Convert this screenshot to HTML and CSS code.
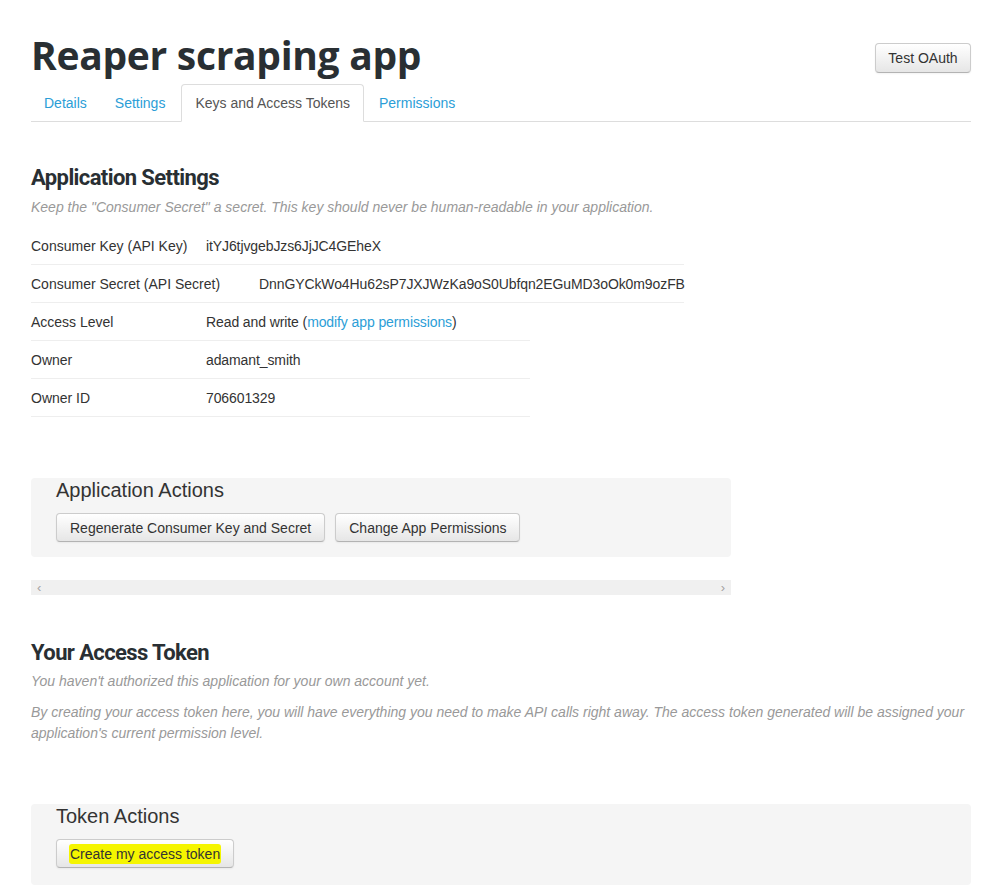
FILE: index.html
```html
<!DOCTYPE html>
<html>
<head>
<meta charset="utf-8">
<link rel="stylesheet" href="styles.css">
</head>
<body>
<div class="page">
  <div class="header">
    <h1 class="title">Reaper scraping app</h1>
    <button class="btn btn-oauth">Test OAuth</button>
  </div>
  <ul class="tabs">
    <li class="tab"><a>Details</a></li>
    <li class="tab"><a>Settings</a></li>
    <li class="tab active"><a>Keys and Access Tokens</a></li>
    <li class="tab"><a>Permissions</a></li>
  </ul>

  <h2 class="section-title first">Application Settings</h2>
  <p class="hint hint-settings">Keep the "Consumer Secret" a secret. This key should never be human-readable in your application.</p>

  <div class="rows">
    <div class="row wide"><span class="label">Consumer Key (API Key)</span><span class="value">itYJ6tjvgebJzs6JjJC4GEheX</span></div>
    <div class="row wide"><span class="label label-long">Consumer Secret (API Secret)</span><span class="value">DnnGYCkWo4Hu62sP7JXJWzKa9oS0Ubfqn2EGuMD3oOk0m9ozFB</span></div>
    <div class="row"><span class="label">Access Level</span><span class="value">Read and write (<a class="link">modify app permissions</a>)</span></div>
    <div class="row"><span class="label">Owner</span><span class="value">adamant_smith</span></div>
    <div class="row"><span class="label">Owner ID</span><span class="value">706601329</span></div>
  </div>

  <div class="well app-actions">
    <h3 class="well-title">Application Actions</h3>
    <div class="btn-row">
      <button class="btn btn-wide">Regenerate Consumer Key and Secret</button>
      <button class="btn btn-wide">Change App Permissions</button>
    </div>
  </div>
  <div class="hscroll">
    <span class="chev">&#x2039;</span>
    <span class="chev">&#x203A;</span>
  </div>

  <h2 class="section-title token">Your Access Token</h2>
  <p class="hint hint-token">You haven't authorized this application for your own account yet.</p>
  <p class="hint">By creating your access token here, you will have everything you need to make API calls right away. The access token generated will be assigned your application's current permission level.</p>

  <div class="well token-actions">
    <h3 class="well-title">Token Actions</h3>
    <div class="btn-row">
      <button class="btn"><span class="highlight">Create my access token</span></button>
    </div>
  </div>
</div>
</body>
</html>
```

FILE: styles.css
```css
* { box-sizing: border-box; }
html, body { margin: 0; padding: 0; background: #fff; }
body {
  font-family: "Liberation Sans", Arial, sans-serif;
  font-size: 14px;
  line-height: 20px;
  color: #333;
}
.page {
  width: 993px;
  padding: 0 22px 0 31px;
}
.header {
  display: flex;
  justify-content: space-between;
  align-items: flex-start;
  height: 84px;
}
.title {
  margin: 33px 0 0 0;
  font-family: "Open Sans", sans-serif;
  font-weight: 700;
  font-size: 39px;
  line-height: 44px;
  letter-spacing: -0.3px;
  color: #292f33;
}
.btn {
  font-family: "Liberation Sans", Arial, sans-serif;
  font-size: 14px;
  line-height: 20px;
  color: #333;
  padding: 4px 12px;
  border: 1px solid #ccc;
  border-bottom-color: #b3b3b3;
  border-radius: 4px;
  background: linear-gradient(#ffffff, #e6e6e6);
  box-shadow: inset 0 1px 0 rgba(255,255,255,.2), 0 1px 2px rgba(0,0,0,.05);
  cursor: pointer;
}
.btn-wide { padding: 4px 13px; }
.btn-oauth {
  margin-top: 43px;
  width: 96px;
  height: 30px;
  padding: 0;
}
.tabs {
  list-style: none;
  margin: 0;
  padding: 0;
  display: flex;
  border-bottom: 1px solid #ddd;
  height: 38px;
}
.tab { margin-right: 2px; margin-bottom: -1px; }
.tab a {
  display: block;
  padding: 8px 12px;
  line-height: 20px;
  border: 1px solid transparent;
  border-radius: 4px 4px 0 0;
  color: #2b9ed7;
}
.tab.active { margin-left: 1px; }
.tab.active a {
  padding: 8px 13px;
  color: #555;
  background: #fff;
  border-color: #ddd #ddd transparent;
}
.section-title {
  font-family: "Roboto", sans-serif;
  font-weight: 700;
  font-size: 22px;
  line-height: 30px;
  letter-spacing: -0.6px;
  color: #292f33;
  margin: 0;
}
.section-title.first { margin-top: 41px; }
.hint {
  margin: 4px 0 10px;
  font-style: italic;
  color: #999;
  line-height: 21px;
}
.hint.hint-settings { margin-bottom: 9px; }
.hint.hint-token { margin-top: 3px; }
.hint + .hint { margin-top: 0; }
.rows { margin-top: 0; }
.row {
  display: flex;
  width: 499px;
  height: 38px;
  align-items: center;
  border-bottom: 1px solid #eee;
}
.row.wide { width: 653px; }
.label { width: 175px; flex: none; }
.label.label-long { width: 228px; }
.value { letter-spacing: -0.1px; }
.link { color: #2b9ed7; }
.well {
  background: #f5f5f5;
  border-radius: 4px;
  padding: 0 25px;
}
.app-actions {
  width: 700px;
  margin-top: 61px;
  height: 79px;
}
.well-title {
  margin: 0;
  padding-top: 1px;
  font-family: "Liberation Sans", Arial, sans-serif;
  font-weight: 400;
  font-size: 20px;
  line-height: 22px;
  color: #333;
}
.btn-row {
  display: flex;
  gap: 10px;
  margin-top: 12px;
}
.btn-row .btn { height: 29px; }
.hscroll {
  width: 700px;
  height: 15px;
  margin-top: 23px;
  background: #f0f0f0;
  display: flex;
  justify-content: space-between;
  align-items: center;
  padding: 0 6px;
  color: #a3a3a3;
  font-size: 13px;
  line-height: 15px;
}
.section-title.token { margin-top: 43px; }
.token-actions {
  width: 940px;
  margin-top: 60px;
  height: 81px;
}
.highlight {
  background: #f5f500;
  padding: 2px 1px;
  border-radius: 3px;
}
```
